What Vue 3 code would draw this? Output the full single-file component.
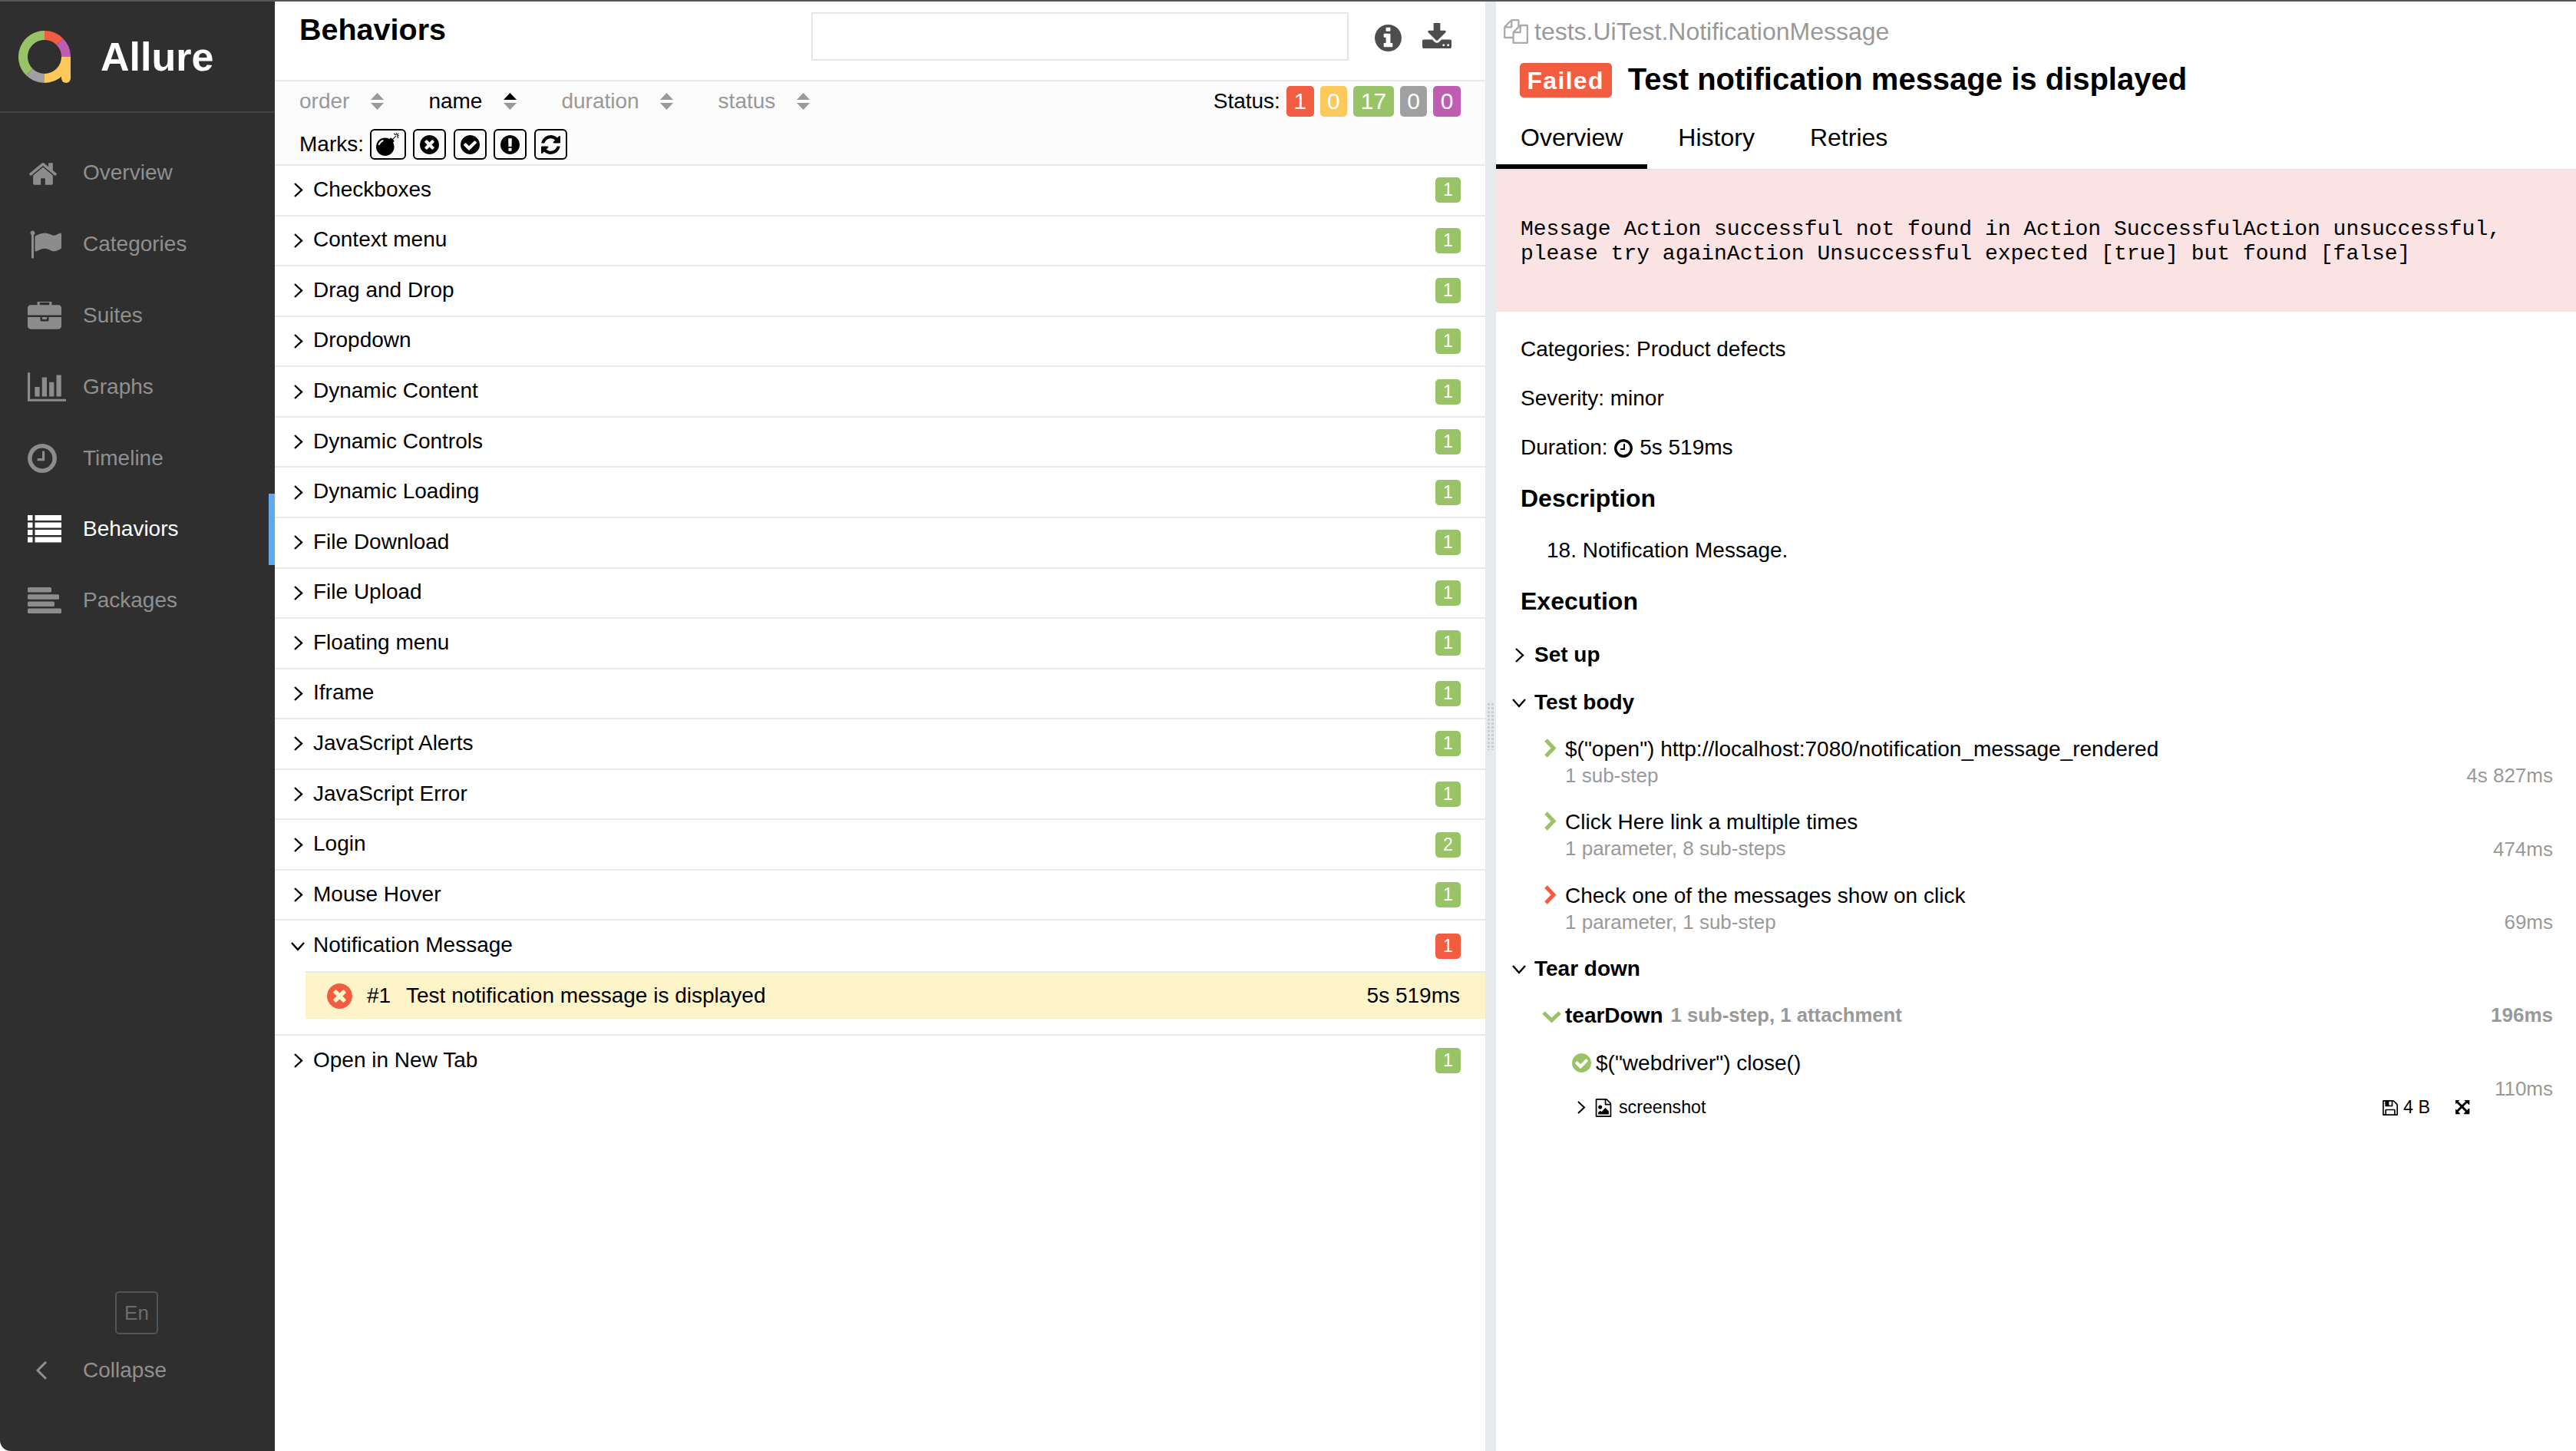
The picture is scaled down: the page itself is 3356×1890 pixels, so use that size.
<script setup>
const nav = [
  { label: 'Overview', icon: 'home' },
  { label: 'Categories', icon: 'flag' },
  { label: 'Suites', icon: 'case' },
  { label: 'Graphs', icon: 'chart' },
  { label: 'Timeline', icon: 'clock' },
  { label: 'Behaviors', icon: 'list', active: true },
  { label: 'Packages', icon: 'pack' }
]

const sorters = [
  { label: 'order' },
  { label: 'name', active: true },
  { label: 'duration' },
  { label: 'status' }
]

const counts = [
  { n: 1, cls: 'failed' },
  { n: 0, cls: 'broken' },
  { n: 17, cls: 'passed' },
  { n: 0, cls: 'skipped' },
  { n: 0, cls: 'unknown' }
]

const before = [
  ['Checkboxes', 1], ['Context menu', 1], ['Drag and Drop', 1], ['Dropdown', 1],
  ['Dynamic Content', 1], ['Dynamic Controls', 1], ['Dynamic Loading', 1],
  ['File Download', 1], ['File Upload', 1], ['Floating menu', 1], ['Iframe', 1],
  ['JavaScript Alerts', 1], ['JavaScript Error', 1], ['Login', 2], ['Mouse Hover', 1]
]

const steps = [
  { title: '$("open") http://localhost:7080/notification_message_rendered', sub: '1 sub-step', time: '4s 827ms', cls: 'ok' },
  { title: 'Click Here link a multiple times', sub: '1 parameter, 8 sub-steps', time: '474ms', cls: 'ok' },
  { title: 'Check one of the messages show on click', sub: '1 parameter, 1 sub-step', time: '69ms', cls: 'bad' }
]

const P = {
  times: 'M1277 1122q0-26-19-45l-181-181 181-181q19-19 19-45 0-27-19-46l-90-90q-19-19-46-19-26 0-45 19l-181 181-181-181q-19-19-45-19-27 0-46 19l-90 90q-19 19-19 46 0 26 19 45l181 181-181 181q-19 19-19 45 0 27 19 46l90 90q19 19 46 19 26 0 45-19l181-181 181 181q19 19 45 19 27 0 46-19l90-90q19-19 19-46zm387-226q0 209-103 385.500t-279.500 279.500-385.500 103-385.500-103-279.500-279.500-103-385.500 103-385.500 279.500-279.500 385.500-103 385.500 103 279.500 279.500 103 385.500z',
  check: 'M1412 734q0-28-18-46l-91-90q-19-19-45-19t-45 19l-408 407-226-226q-19-19-45-19t-45 19l-91 90q-18 18-18 46 0 27 18 45l362 362q19 19 45 19 27 0 46-19l543-543q18-18 18-45zm252 162q0 209-103 385.500t-279.500 279.500-385.500 103-385.500-103-279.500-279.500-103-385.500 103-385.500 279.500-279.500 385.500-103 385.500 103 279.500 279.500 103 385.500z',
  clock: 'M1024 544v448q0 14-9 23t-23 9h-320q-14 0-23-9t-9-23v-64q0-14 9-23t23-9h224v-352q0-14 9-23t23-9h64q14 0 23 9t9 23zm416 352q0-148-73-273t-198-198-273-73-273 73-198 198-73 273 73 273 198 198 273 73 273-73 198-198 73-273zm224 0q0 209-103 385.500t-279.500 279.500-385.500 103-385.500-103-279.500-279.500-103-385.500 103-385.500 279.500-279.500 385.500-103 385.500 103 279.500 279.500 103 385.500z'
}
</script>

<template>
  <div class="page">
    <aside class="side">
      <div class="brand">
        <svg class="logo" viewBox="0 0 68 68" fill="none" stroke-width="12">
          <path d="M62 34V62" stroke="#fdc95b" stroke-linecap="round" />
          <path d="M34 6A28 28 0 0 1 53.800 14.200" stroke="#f25c41" />
          <path d="M53.800 14.200A28 28 0 0 1 62 34" stroke="#be5db2" />
          <path d="M62 34A28 28 0 0 1 34 62" stroke="#fdc95b" />
          <path d="M34 62A28 28 0 0 1 14.200 53.800" stroke="#a0a0a0" />
          <path d="M14.200 53.800A28 28 0 0 1 34 6" stroke="#99c367" />
        </svg>
        <span class="brand-name">Allure</span>
      </div>
      <nav class="nav">
        <div v-for="item in nav" :key="item.label" class="nav-item" :class="{ active: item.active }">
          <span class="nav-icon">
            <svg v-if="item.icon === 'home'" width="40" height="32" viewBox="0 128 1792 1408"><path d="M1472 992v480q0 26-19 45t-45 19h-384v-384h-256v384h-384q-26 0-45-19t-19-45v-480q0-1 .5-3t.5-3l575-474 575 474q1 2 1 6zm223-69l-62 74q-8 9-21 11h-3q-13 0-21-7l-692-577-692 577q-12 8-24 7-13-2-21-11l-62-74q-8-10-7-23.500t11-21.500l719-599q32-26 76-26t76 26l244 204v-195q0-14 9-23t23-9h192q14 0 23 9t9 23v408l219 182q10 8 11 21.500t-7 23.500z" /></svg>
            <svg v-else-if="item.icon === 'flag'" class="flag" width="42" height="37" viewBox="0 128 1792 1536"><path d="M320 256q0 72-64 110v1266q0 13-9.500 22.500t-22.500 9.500h-64q-13 0-22.500-9.500t-9.500-22.500v-1266q-64-38-64-110 0-53 37.500-90.500t90.500-37.500 90.500 37.500 37.500 90.500zm1472 64v763q0 25-12.500 38.500t-39.500 27.500q-215 116-369 116-61 0-123.500-22t-108.500-48-115.500-48-142.500-22q-192 0-464 146-17 9-33 9-26 0-45-19t-19-45v-742q0-32 31-55 21-14 79-43 236-120 421-120 107 0 200 29t219 88q38 19 88 19 54 0 117.500-21t110-47 88-47 54.500-21q26 0 45 19t19 45z" /></svg>
            <svg v-else-if="item.icon === 'case'" width="44" height="36" viewBox="0 96 1792 1440"><path d="M640 256h512v-128h-512v128zm1152 640v480q0 66-47 113t-113 47h-1472q-66 0-113-47t-47-113v-480h672v160q0 26 19 45t45 19h320q26 0 45-19t19-45v-160h672zm-768 0v128h-256v-128h256zm768-480v384h-1792v-384q0-66 47-113t113-47h352v-160q0-40 28-68t68-28h576q40 0 68 28t28 68v160h352q66 0 113 47t47 113z" /></svg>
            <svg v-else-if="item.icon === 'chart'" width="50" height="38" viewBox="0 128 2048 1536"><path d="M640 896v512h-256v-512h256zm384-512v1024h-256v-1024h256zm1024 1152v128h-2048v-1536h128v1408h1920zm-640-896v768h-256v-768h256zm384-384v1152h-256v-1152h256z" /></svg>
            <svg v-else-if="item.icon === 'clock'" width="38" height="38" viewBox="128 128 1536 1536"><path :d="P.clock" /></svg>
            <svg v-else-if="item.icon === 'list'" width="44" height="36" viewBox="0 0 44 36">
              <rect x="0" y="0" width="6.500" height="7" /><rect x="9.500" y="0" width="34.500" height="7" />
              <rect x="0" y="9.500" width="6.500" height="7" /><rect x="9.500" y="9.500" width="34.500" height="7" />
              <rect x="0" y="19" width="6.500" height="7" /><rect x="9.500" y="19" width="34.500" height="7" />
              <rect x="0" y="28.500" width="6.500" height="7" /><rect x="9.500" y="28.500" width="34.500" height="7" />
            </svg>
            <svg v-else width="44" height="34" viewBox="0 0 44 34">
              <rect width="31" height="6.500" rx="1.500" /><rect y="9.300" width="41" height="6.500" rx="1.500" />
              <rect y="18.600" width="35" height="6.500" rx="1.500" /><rect y="27.500" width="44" height="6.500" rx="1.500" />
            </svg>
          </span>
          <span>{{ item.label }}</span>
        </div>
      </nav>
      <div class="lang">En</div>
      <div class="collapse">
        <svg class="collapse-chev" width="16" height="26" viewBox="0 0 16 26" fill="none"><path d="M14 2L3 13L14 24" stroke="#8f8f8f" stroke-width="3" /></svg>
        <span>Collapse</span>
      </div>
    </aside>

    <main class="tree-pane">
      <header class="tree-head">
        <h2 class="tree-title">Behaviors</h2>
        <div class="search"></div>
        <svg class="info" width="35" height="35" viewBox="128 128 1536 1536"><path d="M1152 1376v-160q0-14-9-23t-23-9h-96v-512q0-14-9-23t-23-9h-320q-14 0-23 9t-9 23v160q0 14 9 23t23 9h96v320h-96q-14 0-23 9t-9 23v160q0 14 9 23t23 9h448q14 0 23-9t9-23zm-128-896v-160q0-14-9-23t-23-9h-192q-14 0-23 9t-9 23v160q0 14 9 23t23 9h192q14 0 23-9t9-23zm640 416q0 209-103 385.500t-279.500 279.500-385.500 103-385.500-103-279.500-279.500-103-385.500 103-385.500 279.500-279.500 385.500-103 385.500 103 279.500 279.500 103 385.500z" /></svg>
        <svg class="download" width="38" height="34" viewBox="64 128 1664 1408"><path d="M1344 1344q0-26-19-45t-45-19-45 19-19 45 19 45 45 19 45-19 19-45zm256 0q0-26-19-45t-45-19-45 19-19 45 19 45 45 19 45-19 19-45zm128-224v320q0 40-28 68t-68 28h-1472q-40 0-68-28t-28-68v-320q0-40 28-68t68-28h465l135 136q58 56 136 56t136-56l136-136h464q40 0 68 28t28 68zm-325-569q17 41-14 70l-448 448q-18 19-45 19t-45-19l-448-448q-31-29-14-70 17-39 59-39h256v-448q0-26 19-45t45-19h256q26 0 45 19t19 45v448h256q42 0 59 39z" /></svg>
      </header>

      <div class="toolbar">
        <div class="sort-row">
          <div v-for="s in sorters" :key="s.label" class="sorter" :class="{ active: s.active }">
            <span>{{ s.label }}</span>
            <svg width="17" height="22" viewBox="0 0 17 22">
              <path class="sort-up" d="M0 9L8.500 0L17 9Z" />
              <path d="M0 13L8.500 22L17 13Z" />
            </svg>
          </div>
          <div class="status">
            <span>Status:</span>
            <span v-for="(c, i) in counts" :key="i" class="count" :class="c.cls">{{ c.n }}</span>
          </div>
        </div>
        <div class="marks">
          <span class="marks-label">Marks:</span>
          <span class="mark wide">
            <svg width="30" height="30" viewBox="0 0 1792 1792"><path d="M571 589q-10-25-34-35t-49 0q-108 44-191 127t-127 191q-10 25 0 49t35 34q13 5 24 5 42 0 60-40 34-84 98.500-148.500t148.500-98.500q25-11 35-35t0-49zm942-356l46 46-244 243 68 68q19 19 19 45.500t-19 45.500l-64 64q89 161 89 343 0 143-55.500 273.500t-150 225-225 150-273.500 55.500-273.500-55.500-225-150-150-225-55.500-273.500 55.500-273.500 150-225 225-150 273.500-55.500q182 0 343 89l64-64q19-19 45.500-19t45.500 19l68 68zm8-56q-10 10-22 10-13 0-23-10l-91-90q-9-10-9-23t9-23q10-9 23-9t23 9l90 91q10 9 10 22.500t-10 22.500zm230 230q-11 9-23 9t-23-9l-90-91q-10-9-10-22.500t10-22.500q9-10 22.500-10t22.500 10l91 90q9 10 9 23t-9 23zm41-183q0 14-9 23t-23 9h-96q-14 0-23-9t-9-23 9-23 23-9h96q14 0 23 9t9 23zm-192-192v96q0 14-9 23t-23 9-23-9-9-23v-96q0-14 9-23t23-9 23 9 9 23zm151 55l-91 90q-10 10-22 10-13 0-23-10-10-9-10-22.500t10-22.500l90-91q10-9 23-9t23 9q9 10 9 23t-9 23z" /></svg>
          </span>
          <span class="mark"><svg width="25" height="25" viewBox="128 128 1536 1536"><path :d="P.times" /></svg></span>
          <span class="mark"><svg width="25" height="25" viewBox="128 128 1536 1536"><path :d="P.check" /></svg></span>
          <span class="mark"><svg width="25" height="25" viewBox="128 128 1536 1536"><path d="M896 128q209 0 385.500 103t279.500 279.500 103 385.500-103 385.500-279.500 279.500-385.500 103-385.500-103-279.500-279.500-103-385.500 103-385.500 279.500-279.500 385.500-103zm128 1247v-190q0-14-9-23.500t-22-9.500h-192q-13 0-23 10t-10 23v190q0 13 10 23t23 10h192q13 0 22-9.500t9-23.500zm-2-344l18-621q0-12-10-18-10-8-24-8h-220q-14 0-24 8-10 6-10 18l17 621q0 10 10 17.500t24 7.500h185q14 0 23.500-7.500t10.500-17.500z" /></svg></span>
          <span class="mark"><svg width="25" height="25" viewBox="128 128 1536 1536"><path d="M1639 1056q0 5-1 7-64 268-268 434.500t-478 166.500q-146 0-282.500-55t-243.500-157l-129 129q-19 19-45 19t-45-19-19-45v-448q0-26 19-45t45-19h448q26 0 45 19t19 45-19 45l-137 137q71 66 161 102t187 36q134 0 250-65t186-179q11-17 53-117 8-23 30-23h192q13 0 22.500 9.500t9.500 22.500zm25-800v448q0 26-19 45t-45 19h-448q-26 0-45-19t-19-45 19-45l138-138q-148-137-349-137-134 0-250 65t-186 179q-11 17-53 117-8 23-30 23h-199q-13 0-22.500-9.500t-9.500-22.500v-7q65-268 270-434.500t480-166.500q146 0 284 55.500t245 156.500l130-129q19-19 45-19t45 19 19 45z" /></svg></span>
        </div>
      </div>

      <div v-for="row in before" :key="row[0]" class="group">
        <span class="chev-box"><svg width="13" height="21" viewBox="0 0 13 21" fill="none"><path d="M2 2L11 10.500L2 19" stroke="#000" stroke-width="2.400" /></svg></span>
        <span class="group-name">{{ row[0] }}</span>
        <span class="mini passed">{{ row[1] }}</span>
      </div>

      <div class="group plain">
        <span class="chev-box"><svg width="20" height="13" viewBox="0 0 20 13" fill="none"><path d="M2 2L10 11L18 2" stroke="#000" stroke-width="2.400" /></svg></span>
        <span class="group-name">Notification Message</span>
        <span class="mini failed">1</span>
      </div>
      <div class="leaf-wrap">
        <div class="leaf">
          <svg class="leaf-icon" width="33" height="33" viewBox="128 128 1536 1536"><path :d="P.times" /></svg>
          <span class="leaf-num">#1</span>
          <span class="leaf-name">Test notification message is displayed</span>
          <span>5s 519ms</span>
        </div>
      </div>
      <div class="group plain">
        <span class="chev-box"><svg width="13" height="21" viewBox="0 0 13 21" fill="none"><path d="M2 2L11 10.500L2 19" stroke="#000" stroke-width="2.400" /></svg></span>
        <span class="group-name">Open in New Tab</span>
        <span class="mini passed">1</span>
      </div>
    </main>

    <div class="splitter"><span class="grip"></span></div>

    <section class="detail">
      <div class="path">
        <svg width="32" height="32" viewBox="0 0 1792 1792"><path d="M1696 384q40 0 68 28t28 68v1216q0 40-28 68t-68 28h-960q-40 0-68-28t-28-68v-288h-544q-40 0-68-28t-28-68v-672q0-40 20-88t48-76l408-408q28-28 76-48t88-20h416q40 0 68 28t28 68v328q68-40 128-40h416zm-544 213l-299 299h299v-299zm-640-384l-299 299h299v-299zm196 647l316-316v-416h-384v416q0 40-28 68t-68 28h-416v640h512v-256q0-40 20-88t48-76zm956 804v-1152h-384v416q0 40-28 68t-68 28h-416v640h896z" /></svg>
        <span>tests.UiTest.NotificationMessage</span>
      </div>
      <div class="heading">
        <span class="failed-tag">Failed</span>
        <h2 class="test-title">Test notification message is displayed</h2>
      </div>
      <div class="tabs">
        <span class="tab current">Overview</span>
        <span class="tab">History</span>
        <span class="tab">Retries</span>
      </div>
      <div class="error">
        <div>Message Action successful not found in Action SuccessfulAction unsuccessful,</div>
        <div>please try againAction Unsuccessful expected [true] but found [false]</div>
      </div>

      <div class="facts">
        <div class="fact">Categories: Product defects</div>
        <div class="fact">Severity: minor</div>
        <div class="fact">Duration:
          <svg class="fact-clock" width="24" height="24" viewBox="128 128 1536 1536"><path :d="P.clock" /></svg>
          5s 519ms
        </div>
        <h3 class="sec-title">Description</h3>
        <div class="desc">18. Notification Message.</div>
        <h3 class="sec-title exec">Execution</h3>
      </div>

      <div class="stage first">
        <span class="chev-box"><svg width="13" height="21" viewBox="0 0 13 21" fill="none"><path d="M2 2L11 10.500L2 19" stroke="#000" stroke-width="2.400" /></svg></span>
        <span>Set up</span>
      </div>
      <div class="stage">
        <span class="chev-box"><svg width="20" height="13" viewBox="0 0 20 13" fill="none"><path d="M2 2L10 11L18 2" stroke="#000" stroke-width="2.400" /></svg></span>
        <span>Test body</span>
      </div>

      <div v-for="s in steps" :key="s.title" class="step">
        <svg class="step-chev" :class="s.cls" width="17" height="25" viewBox="0 0 17 25" fill="none"><path d="M3 2L13 12.500L3 23" stroke-width="5" /></svg>
        <div class="step-main">
          <div class="step-title">{{ s.title }}</div>
          <div class="step-sub">{{ s.sub }}</div>
        </div>
        <span class="time">{{ s.time }}</span>
      </div>

      <div class="stage down">
        <span class="chev-box"><svg width="20" height="13" viewBox="0 0 20 13" fill="none"><path d="M2 2L10 11L18 2" stroke="#000" stroke-width="2.400" /></svg></span>
        <span>Tear down</span>
      </div>
      <div class="fixture">
        <svg class="step-chev ok" width="25" height="17" viewBox="0 0 25 17" fill="none"><path d="M2 3L12.500 13L23 3" stroke-width="5" /></svg>
        <b class="fixture-name">tearDown</b>
        <b class="fixture-sub">1 sub-step, 1 attachment</b>
        <b class="time fixture-time">196ms</b>
      </div>
      <div class="inner">
        <div class="inner-main">
          <div class="webdriver">
            <svg class="ok-fill" width="25" height="25" viewBox="128 128 1536 1536"><path :d="P.check" /></svg>
            <span>$("webdriver") close()</span>
          </div>
          <div class="attach">
            <svg width="12" height="19" viewBox="0 0 12 19" fill="none"><path d="M2 2L10 9.500L2 17" stroke="#000" stroke-width="2" /></svg>
            <svg class="file" width="22" height="24" viewBox="128 0 1536 1792"><path d="M1596 380q28 28 48 76t20 88v1152q0 40-28 68t-68 28h-1344q-40 0-68-28t-28-68v-1600q0-40 28-68t68-28h896q40 0 88 20t76 48zm-444-244v376h376q-10-29-22-41l-313-313q-12-12-41-22zm384 1528v-1024h-416q-40 0-68-28t-28-68v-416h-768v1536h1280zm-128-448v320h-1024v-192l192-192 128 128 384-384zm-832-192q-80 0-136-56t-56-136 56-136 136-56 136 56 56 136-56 136-136 56z" /></svg>
            <span class="attach-name">screenshot</span>
            <svg class="floppy" width="20" height="20" viewBox="128 128 1536 1536"><path d="M512 1536h768v-384h-768v384zm896 0h128v-896q0-14-10-38.500t-20-34.500l-281-281q-10-10-34-20t-39-10v416q0 40-28 68t-68 28h-576q-40 0-68-28t-28-68v-416h-128v1280h128v-416q0-40 28-68t68-28h832q40 0 68 28t28 68v416zm-384-928v-320q0-13-9.500-22.500t-22.500-9.500h-192q-13 0-22.500 9.500t-9.500 22.500v320q0 13 9.500 22.500t22.500 9.500h192q13 0 22.500-9.500t9.500-22.500zm640 32v928q0 40-28 68t-68 28h-1344q-40 0-68-28t-28-68v-1344q0-40 28-68t68-28h928q40 0 88 20t76 48l280 280q28 28 48 76t20 88z" /></svg>
            <span class="attach-size">4 B</span>
            <svg class="expand" width="20" height="20" viewBox="128 128 1536 1536"><path d="M1283 413l-355 355 355 355 144-144q29-31 70-14 39 17 39 59v448q0 26-19 45t-45 19h-448q-42 0-59-40-17-39 14-69l144-144-355-355-355 355 144 144q31 30 14 69-17 40-59 40h-448q-26 0-45-19t-19-45v-448q0-42 40-59 39-17 69 14l144 144 355-355-355-355-144 144q-19 19-45 19-12 0-24-5-40-17-40-59v-448q0-26 19-45t45-19h448q42 0 59 40 17 39-14 69l-144 144 355 355 355-355-144-144q-31-30-14-69 17-40 59-40h448q26 0 45 19t19 45v448q0 42-39 59-13 5-25 5-26 0-45-19z" /></svg>
          </div>
        </div>
        <span class="time inner-time">110ms</span>
      </div>
    </section>
  </div>
</template>

<style>
html, body {
  margin: 0;
  background: #16222b;
}
</style>

<style scoped>
.page {
  display: flex;
  width: 3356px;
  height: 1890px;
  box-sizing: border-box;
  border-top: 2px solid #555558;
  background: #fff;
  color: #000;
  font-family: "Liberation Sans", Arial, sans-serif;
  font-size: 28px;
  overflow: hidden;
}

/* sidebar */
.side {
  width: 358px;
  flex-shrink: 0;
  display: flex;
  flex-direction: column;
  background: #2f2f2f;
  color: #8f8f8f;
  border-bottom-left-radius: 14px;
}
.brand {
  height: 143px;
  display: flex;
  align-items: center;
  padding-left: 24px;
  border-bottom: 2px solid #434343;
  box-sizing: content-box;
}
.logo {
  width: 68px;
  height: 68px;
}
.brand-name {
  margin-left: 39px;
  color: #fff;
  font-size: 52px;
  font-weight: 700;
}
.nav {
  margin-top: 32px;
  flex: 1;
}
.nav-item {
  height: 92.800px;
  display: flex;
  align-items: center;
  padding-left: 36px;
}
.nav-item.active {
  color: #fff;
  box-shadow: inset -8px 0 0 #5fa9ee;
}
.nav-icon {
  width: 72px;
  display: flex;
  fill: #8c8c8c;
}
.flag {
  margin-left: 2px;
}
.active .nav-icon {
  fill: #fff;
}
.lang {
  width: 52px;
  height: 52px;
  margin-left: 150px;
  border: 2px solid #555;
  border-radius: 5px;
  display: flex;
  align-items: center;
  justify-content: center;
  color: #6c6c6c;
  font-size: 26px;
}
.collapse {
  height: 94px;
  margin-bottom: 58px;
  display: flex;
  align-items: center;
}
.collapse-chev {
  margin-left: 46px;
  margin-right: 46px;
}

/* tree */
.tree-pane {
  width: 1577px;
  flex-shrink: 0;
}
.tree-head {
  height: 102px;
  display: flex;
  align-items: flex-start;
  padding-left: 32px;
  padding-right: 44px;
  border-bottom: 2px solid #e7eaed;
  box-sizing: content-box;
  width: 1501px;
}
.tree-title {
  flex: 1;
  margin: 13px 0 0;
  font-size: 39.500px;
  line-height: 46px;
  font-weight: 700;
}
.search {
  width: 696px;
  height: 59px;
  margin-top: 14px;
  border: 2px solid #e4e6e8;
}
.info {
  margin: 30px 0 0 34px;
  fill: #4d4d4d;
}
.download {
  margin: 28px 0 0 27px;
  fill: #4d4d4d;
}
.toolbar {
  height: 108px;
  background: #fbfbfb;
  border-bottom: 2px solid #e7eaed;
  box-sizing: content-box;
}
.sort-row {
  padding: 6px 32px 0;
  display: flex;
  align-items: center;
  gap: 58.500px;
}
.sorter {
  display: flex;
  align-items: center;
  gap: 27.500px;
  color: #999;
  fill: #999;
}
.sorter.active {
  color: #000;
}
.sorter.active .sort-up {
  fill: #000;
}
.status {
  margin-left: auto;
  display: flex;
  align-items: center;
  gap: 8px;
}
.count {
  height: 40px;
  min-width: 16px;
  padding: 0 9.500px;
  border-radius: 5px;
  color: #fff;
  font-size: 30px;
  line-height: 40px;
  text-align: center;
}
.failed { background: #f25c41; }
.broken { background: #fdc95b; }
.passed { background: #99c367; }
.skipped { background: #a0a0a0; }
.unknown { background: #be5db2; }
.marks {
  margin-top: 16px;
  padding-left: 32px;
  display: flex;
  align-items: center;
  gap: 9.500px;
}
.marks-label {
  margin-right: -2px;
}
.mark {
  width: 39px;
  height: 36px;
  border: 2px solid #000;
  border-radius: 6px;
  display: flex;
  align-items: center;
  justify-content: center;
}
.mark.wide {
  width: 43px;
}
.group {
  height: 65.570px;
  box-sizing: border-box;
  display: flex;
  align-items: center;
  padding: 0 32px 0 20px;
  border-bottom: 2px solid #e7eaed;
}
.group.plain {
  border-bottom: 0;
}
.chev-box {
  width: 20px;
  margin-right: 10px;
  display: flex;
  justify-content: center;
}
.group-name {
  flex: 1;
  margin-bottom: 2px;
}
.mini {
  width: 33px;
  height: 33px;
  border-radius: 5px;
  color: #fff;
  font-size: 23px;
  line-height: 33px;
  text-align: center;
}
.leaf-wrap {
  height: 82px;
  padding-left: 40px;
  border-bottom: 2px solid #e7eaed;
  box-sizing: content-box;
}
.leaf {
  height: 60px;
  display: flex;
  align-items: center;
  padding: 0 33px 0 28px;
  border-top: 2px solid #e7eaed;
  background: #fdf5c9;
}
.leaf-icon {
  fill: #f25c41;
}
.leaf-num {
  margin-left: 19px;
  width: 51px;
}
.leaf-name {
  flex: 1;
}

.splitter {
  width: 14px;
  flex-shrink: 0;
  background: #e7eaed;
  display: flex;
  align-items: center;
  justify-content: center;
}
.grip {
  width: 10px;
  height: 62px;
  background-image: radial-gradient(circle, #c9ccd0 1.500px, transparent 2px);
  background-size: 5px 5px;
}

/* detail */
.detail {
  flex: 1;
  min-width: 0;
}
.path {
  height: 36px;
  margin-top: 21px;
  padding-left: 10px;
  display: flex;
  align-items: center;
  gap: 8px;
  color: #999;
  fill: #aaa;
  font-size: 32px;
}
.heading {
  margin-top: 23px;
  padding-left: 30.500px;
  display: flex;
  align-items: center;
  height: 45px;
}
.failed-tag {
  height: 45px;
  padding: 0 10px;
  border-radius: 5px;
  background: #f25c41;
  color: #fff;
  font-size: 32px;
  font-weight: 700;
  line-height: 47px;
  letter-spacing: 1.300px;
}
.test-title {
  margin: 0 0 3px 21px;
  font-size: 40px;
  font-weight: 700;
}
.tabs {
  margin-top: 17px;
  display: flex;
  gap: 8px;
  border-bottom: 2px solid #e4e4e4;
}
.tab {
  height: 70px;
  padding: 0 32px;
  font-size: 32px;
  line-height: 70px;
  border-bottom: 6px solid transparent;
}
.tab.current {
  border-bottom-color: #000;
}
.error {
  padding: 61px 32px 59px;
  background: #fbe3e3;
  font-family: "Liberation Mono", "Courier New", monospace;
  font-size: 28px;
  line-height: 32px;
}
.facts {
  margin-top: 17px;
  padding-left: 32px;
}
.fact {
  height: 64px;
  line-height: 64px;
}
.fact-clock {
  vertical-align: -4px;
  margin: 0 1px;
}
.sec-title {
  margin: 0;
  height: 68px;
  font-size: 32px;
  font-weight: 700;
  line-height: 68px;
}
.sec-title.exec {
  height: 64px;
  line-height: 64px;
}
.desc {
  height: 68px;
  padding-left: 34px;
  line-height: 68px;
}
.stage {
  height: 62px;
  display: flex;
  align-items: center;
  padding-left: 20px;
  font-weight: 700;
}
.stage.first {
  margin-top: 7px;
}
.stage.down {
  height: 59px;
}
.step {
  height: 95.500px;
  box-sizing: border-box;
  padding: 11.500px 30px 14.500px 62px;
  display: flex;
  align-items: flex-start;
}
.step-chev {
  flex-shrink: 0;
  margin-top: 4px;
}
.step-chev.ok { stroke: #99c367; }
.step-chev.bad { stroke: #f25c41; }
.step-main {
  flex: 1;
  margin-left: 11px;
}
.step-title {
  height: 36px;
  line-height: 36px;
}
.step-sub {
  height: 33px;
  color: #999;
  font-size: 26px;
  line-height: 33px;
}
.time {
  color: #999;
  font-size: 26px;
  line-height: 33px;
}
.step .time {
  align-self: flex-end;
}
.fixture {
  height: 62px;
  display: flex;
  align-items: center;
  padding: 0 30px 0 60px;
}
.fixture-name {
  margin-left: 5px;
}
.fixture-sub {
  margin-left: 10px;
  color: #999;
  font-size: 25.700px;
}
.fixture-time {
  margin-left: auto;
}
.inner {
  display: flex;
  padding-right: 30px;
}
.inner-main {
  flex: 1;
}
.inner-time {
  align-self: center;
  margin: 14px 0 0 31px;
}
.webdriver {
  height: 62px;
  display: flex;
  align-items: center;
  gap: 6px;
  padding-left: 99px;
}
.ok-fill {
  fill: #99c367;
}
.attach {
  height: 54px;
  display: flex;
  align-items: center;
  padding-left: 105px;
  font-size: 23.200px;
}
.file {
  margin-left: 12px;
}
.attach-name {
  margin-left: 9px;
  flex: 1;
}
.attach-size {
  margin-left: 7px;
}
.expand {
  margin-left: 33px;
}
</style>
